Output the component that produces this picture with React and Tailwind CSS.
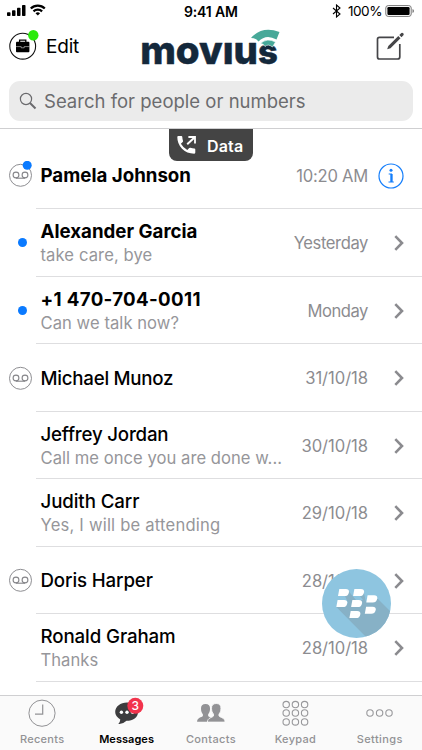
import React from "react";

const rows = [
  { name: "Pamela Johnson", date: "10:20 AM", voicemail: true, unread: true, info: true, nameTrack: "tracking-[0px]", dateTrack: "tracking-[-0.25px]" },
  { name: "Alexander Garcia", sub: "take care, bye", date: "Yesterday", unread: true, nameTrack: "tracking-[0px]", subTrack: "tracking-[0.1px]", dateTrack: "tracking-[-0.4px]" },
  { name: "+1 470-704-0011", sub: "Can we talk now?", date: "Monday", unread: true, nameTrack: "tracking-[0.35px]", subTrack: "tracking-[0.05px]", dateTrack: "tracking-[-0.45px]" },
  { name: "Michael Munoz", date: "31/10/18", voicemail: true, nameTrack: "tracking-[-0.25px]", dateTrack: "tracking-[-0.05px]" },
  { name: "Jeffrey Jordan", sub: "Call me once you are done w...", date: "30/10/18", nameTrack: "tracking-[-0.2px]", subTrack: "tracking-[0.03px]", dateTrack: "tracking-[-0.05px]" },
  { name: "Judith Carr", sub: "Yes, I will be attending", date: "29/10/18", nameTrack: "tracking-[-0.1px]", subTrack: "tracking-[0.2px]", dateTrack: "tracking-[-0.05px]" },
  { name: "Doris Harper", date: "28/10/18", voicemail: true, nameTrack: "tracking-[-0.12px]", dateTrack: "tracking-[-0.05px]" },
  { name: "Ronald Graham", sub: "Thanks", date: "28/10/18", nameTrack: "tracking-[-0.1px]", subTrack: "tracking-[0.05px]", dateTrack: "tracking-[-0.05px]" },
];

function Voicemail({ unread }) {
  return (
    <svg className="block h-7 w-7" viewBox="0 0 28 28" fill="none">
      <circle cx="13.5" cy="14.3" r="11" stroke="#8e8e92" strokeWidth="1" />
      <g stroke="#858589" strokeWidth="1.1">
        <circle cx="9" cy="14" r="2.9" />
        <circle cx="18" cy="14" r="2.9" />
        <path d="M9 17.2H18" />
      </g>
      {unread && <circle cx="20.2" cy="4.3" r="4.5" fill="#0a7aff" />}
    </svg>
  );
}

function Row({ row }) {
  return (
    <li className="flex h-[67.5px] items-center">
      <div className="flex w-9 shrink-0 items-center pl-[7px]">
        {row.voicemail && <Voicemail unread={row.unread} />}
        {!row.voicemail && row.unread && <span className="ml-[11px] h-[9px] w-[9px] rounded-full bg-[#0a7aff]" />}
      </div>
      <div className="flex h-full min-w-0 flex-1 items-center border-b border-[#dedee0] pt-[1.6px] pl-[4.5px]">
        <div className={`flex flex-1 flex-col whitespace-nowrap ${row.sub ? "pt-[0.4px]" : "pt-[1px]"}`}>
          <span className={`text-[18.7px] leading-6 text-black ${row.nameTrack} ${row.unread ? "font-bold" : "font-medium"}`}>{row.name}</span>
          {row.sub && <span className={`text-[16.6px] leading-[22px] text-[#96969a] ${row.subTrack}`}>{row.sub}</span>}
        </div>
        <span className={`text-[16.6px] leading-6 whitespace-nowrap text-[#8c8c90] ${row.dateTrack}`}>{row.date}</span>
        <div className="flex w-[54px] shrink-0 justify-start pl-[10.4px]">
          {row.info ? (
            <svg className="h-[26px] w-[26px]" viewBox="0 0 26 26">
              <circle cx="13" cy="13" r="12" fill="none" stroke="#147efb" strokeWidth="1.2" />
              <circle cx="13" cy="7.3" r="1.5" fill="#147efb" />
              <path d="M10.7 11H14V19M10.5 19H15.8" fill="none" stroke="#147efb" strokeWidth="1" />
              <path d="M13.3 11V19" stroke="#147efb" strokeWidth="2" />
            </svg>
          ) : (
            <svg className="ml-[16px] h-4 w-[11px]" viewBox="0 0 11 16" fill="none">
              <path d="M1.3 1.2L8 8L1.3 14.8" stroke="#8b8b8f" strokeWidth="2.6" />
            </svg>
          )}
        </div>
      </div>
    </li>
  );
}

function StatusBar() {
  return (
    <div className="flex h-[22px] items-center">
      <svg className="h-[22px] w-[50px]" viewBox="0 0 50 22">
        <rect x="7" y="12.3" width="3.5" height="3.7" rx="0.8" />
        <rect x="12" y="10.2" width="3.5" height="5.8" rx="0.8" />
        <rect x="17" y="7.8" width="3.5" height="8.2" rx="0.8" />
        <rect x="22" y="5" width="3.5" height="11" rx="0.8" />
        <g fill="none" stroke="#000" strokeWidth="2.3">
          <path d="M30.8 8.5A10 10 0 0 1 44.8 8.5" />
          <path d="M33.5 11.3A6.2 6.2 0 0 1 42.1 11.3" />
        </g>
        <path d="M35.5 13.2A3.7 3.7 0 0 1 40.1 13.2L37.8 15.6Z" />
      </svg>
      <span className="ml-[134px] w-[59px] text-[14px] font-semibold tracking-[-0.15px] whitespace-nowrap">9:41 AM</span>
      <svg className="ml-[89px] h-[14px] w-[10px]" viewBox="0 0 10 14" fill="none" stroke="#000" strokeWidth="1.1">
        <path d="M1 4L8 10L4.5 13V1L8 4L1 10" />
      </svg>
      <span className="ml-[6px] w-[35px] text-[13.6px] tracking-[-0.5px]">100%</span>
      <svg className="ml-[2px] h-3 w-[30px]" viewBox="0 0 30 12">
        <rect x="0.8" y="0.6" width="25.4" height="10.8" rx="2.4" fill="none" stroke="#777" />
        <rect x="2.4" y="2.1" width="22.2" height="7.8" rx="1.2" />
        <path d="M27.5 4V8Q29 7.4 29 6T27.5 4Z" fill="#777" />
      </svg>
    </div>
  );
}

function Header() {
  return (
    <header className="flex h-[129px] flex-col border-b border-[#cfcfd1]">
      <StatusBar />
      <div className="flex h-[59px] items-start">
        <svg className="mt-[6px] ml-[7px] h-8 w-8" viewBox="0 0 32 32">
          <circle cx="15.7" cy="18.2" r="12.9" fill="none" stroke="#111" strokeWidth="1.1" />
          <path d="M12.6 14.5V12.1H18.8V14.5" fill="none" stroke="#000" strokeWidth="1.3" />
          <rect x="9" y="13.8" width="13.4" height="10.4" rx="0.9" />
          <path d="M9 18.6H14.2V19.8H17.2V18.6H22.4" fill="none" stroke="#fff" strokeWidth="0.5" />
          <circle cx="26.3" cy="7.3" r="5.2" fill="#2bea0b" />
        </svg>
        <span className="mt-[13px] ml-[7px] w-[40px] text-[19px] leading-6 font-normal tracking-[-0.2px]">Edit</span>
        <svg className="ml-[51px] h-[56px] w-[150px]" viewBox="137 22 150 56">
          <text x="140.2" y="63.8" textLength="137.6" lengthAdjust="spacingAndGlyphs" fontFamily="Inter" fontSize="39" fontWeight="800" fill="#14283b" stroke="#14283b" strokeWidth="0.5" strokeLinejoin="round">
            movıu<tspan fontSize="35">s</tspan>
          </text>
          <path d="M251 38Q262 25.5 279.5 32L276.5 39.5Q266 33.5 258.5 41.5Q256 38 251 38Z" fill="#48a999" />
          <path d="M260.5 43.5Q267 37.5 275.5 42L272.5 47Q268 43.5 265 46.5Q263.5 43.5 260.5 43.5Z" fill="#48a999" stroke="#fff" strokeWidth="0.6" />
        </svg>
        <svg className="mt-[9px] ml-[88px] h-[30px] w-[30px]" viewBox="376 31 30 30" fill="none">
          <path d="M395 37.3H380.5Q378.5 37.3 378.5 39.3V57Q378.5 59 380.5 59H398.5Q400.8 59 400.8 57V44" stroke="#454548" strokeWidth="1.7" />
          <path d="M388.2 49.3L389.3 46L399.3 36L401.5 38.2L391.5 48.2Z" fill="#454548" />
          <path d="M400.3 35L402.5 37.2L404.6 35Q405 34 404.2 33.3Q403.3 32.5 402.4 33Z" fill="#454548" />
        </svg>
      </div>
      <div className="mr-[9px] ml-[9px] flex h-10 items-center rounded-[11px] bg-[#ebebeb]">
        <svg className="ml-[10px] h-[18px] w-[18px]" viewBox="0 0 18 18" fill="none" stroke="#6a6a6d">
          <circle cx="7" cy="7" r="5.6" strokeWidth="1.2" />
          <path d="M11 11L16.5 16.5" strokeWidth="2" />
        </svg>
        <span className="ml-[7px] text-[18.5px] leading-6 tracking-[0.01px] whitespace-nowrap text-[#6b6b6e]">Search for people or numbers</span>
      </div>
    </header>
  );
}

function DataBadge() {
  return (
    <div className="absolute top-[129px] left-[169px] flex h-8 w-[84px] items-center rounded-b-[8px] bg-[#444444] text-white">
      <svg className="ml-[8px] h-[18px] w-[19px]" viewBox="0 0 19 18" fill="#fff">
        <path d="M0.3 1Q0.3 0 1.3 0H4.3Q5.3 0 5.3 1Q5.4 3.2 6 4.7Q6.2 5.4 5.7 5.9L3.9 7.8Q6.3 12 10.3 14L12.2 12.1Q12.8 11.6 13.4 11.8Q15.5 12.5 17.3 12.5Q18.3 12.6 18.3 13.5V16.6Q18.3 17.7 17.3 17.7Q9.8 17.5 5 12.7Q0.3 7.8 0.3 1Z" />
        <path d="M11.4 1H18V7.5" fill="none" stroke="#fff" strokeWidth="1.8" />
        <path d="M17.5 1.5L10.2 8.3" stroke="#fff" strokeWidth="1.9" />
      </svg>
      <span className="ml-[11px] pt-[1px] text-[16px] font-semibold tracking-[0.15px]">Data</span>
    </div>
  );
}

const berries = [[16, 20], [31.1, 20], [14.3, 31], [29.1, 31], [44.3, 26.3], [42.8, 37.7], [27.4, 42]];

function BerryButton() {
  return (
    <svg className="absolute top-[569px] left-[322px] h-[69px] w-[69px]" viewBox="0 0 69 69">
      <defs>
        <clipPath id="disc"><circle cx="34.5" cy="34.5" r="34.5" /></clipPath>
      </defs>
      <circle cx="34.5" cy="34.5" r="34.5" fill="#8ec5e0" />
      <path clipPath="url(#disc)" d="M14.3 38L46 70H70V44L55 29L44 33L41.5 22L38 27L41 31L34 31L26.5 22L23 27L26 34Z" fill="#87b1c6" />
      {berries.map(([x, y]) => (
        <path key={`${x}-${y}`} d="M1.3 0H7.8Q11.2 0 11 2.9Q10.5 7.1 6.4 7.1H0Z" transform={`translate(${x} ${y})`} fill="#fff" />
      ))}
    </svg>
  );
}

function Person({ x, y, s }) {
  return (
    <path
      transform={`translate(${x} ${y}) scale(${s})`}
      d="M8 0C11.2 0 13 1.8 12.8 5C12.8 7.8 11.9 9.5 10.8 10.8V12.8C12 14.4 17 14.4 17 19H-1C-1 14.4 4 14.4 5.2 12.8V10.8C4.1 9.5 3.2 7.8 3.2 5C3 1.8 4.8 0 8 0Z"
    />
  );
}

const tabIcons = {
  Recents: (
    <g fill="none" stroke="#929295">
      <circle cx="20" cy="17.2" r="13.1" strokeWidth="1" />
      <path d="M20.7 8.5V18.2H13" strokeWidth="1.2" />
    </g>
  ),
  Messages: (
    <g>
      <path d="M20 6.5C26.6 6.5 31 10.6 31 16C31 21.4 26 24.8 19.5 24.8Q15.5 28.6 11.3 28Q13.2 26 13.3 23.4Q8.2 20.5 8.2 16C8.2 10.6 13.5 6.5 20 6.5Z" fill="#3c3c3e" />
      <g fill="#fff">
        <circle cx="14.4" cy="16.3" r="1.7" /><circle cx="20" cy="16.3" r="1.7" /><circle cx="25.6" cy="16.3" r="1.7" />
      </g>
      <circle cx="28.3" cy="9.8" r="8" fill="#f2334c" />
      <text x="28.3" y="14" textAnchor="middle" fontFamily="Inter" fontSize="12" fontWeight="500" fill="#fff">3</text>
    </g>
  ),
  Contacts: (
    <g fill="#929295">
      <Person x={7} y={8} s={0.94} />
      <g stroke="#fafafa" strokeWidth="0.9"><Person x={17.4} y={7.5} s={0.98} /></g>
    </g>
  ),
  Keypad: (
    <g fill="none" stroke="#98989b" strokeWidth="1.1">
      {[8.6, 17, 25.9].map((y) => [11.2, 20.4, 29.6].map((x) => <circle key={`${x}-${y}`} cx={x} cy={y} r="3.2" />))}
    </g>
  ),
  Settings: (
    <g fill="none" stroke="#98989b" strokeWidth="1.1">
      {[10, 19.6, 29].map((x) => <circle key={x} cx={x} cy="17" r="3.2" />)}
    </g>
  ),
};

const tabTracks = {
  Recents: "tracking-[0.3px]",
  Messages: "tracking-[0.05px]",
  Contacts: "tracking-[0.35px]",
  Keypad: "tracking-[0.3px]",
  Settings: "tracking-[0.4px]",
};

function TabBar() {
  return (
    <nav className="absolute inset-x-0 bottom-0 grid h-[55px] grid-cols-5 border-t border-[#cfcfd1] bg-[#fafafa]">
      {Object.keys(tabIcons).map((label) => (
        <div key={label} className="flex flex-col items-center">
          <svg className="h-9 w-10 shrink-0" viewBox="0 0 40 36">{tabIcons[label]}</svg>
          <span className={`text-[11px] leading-[15px] ${tabTracks[label]} ${label === "Messages" ? "font-semibold text-black" : "font-medium text-[#929295]"}`}>{label}</span>
        </div>
      ))}
    </nav>
  );
}

export default function App() {
  return (
    <div className="relative h-[750px] w-[422px] overflow-hidden bg-white font-['Inter','Liberation_Sans',sans-serif] text-black">
      <Header />
      <ul className="pt-[12.5px]">
        {rows.map((row) => <Row key={row.name} row={row} />)}
      </ul>
      <DataBadge />
      <BerryButton />
      <TabBar />
    </div>
  );
}
